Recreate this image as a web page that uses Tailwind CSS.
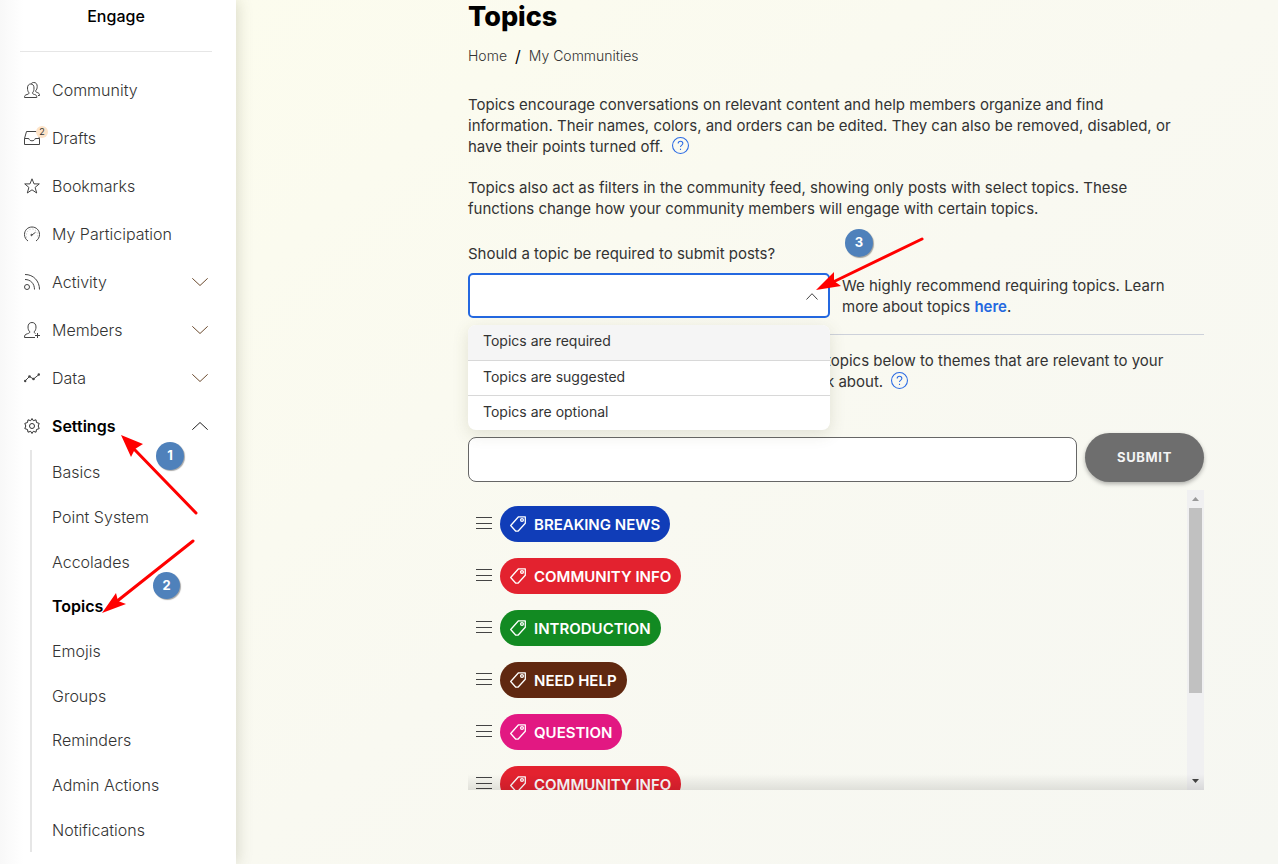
<!DOCTYPE html>
<html lang="en">
<head>
  <meta charset="UTF-8">
  <meta name="viewport" content="width=device-width, initial-scale=1.0">
  <title>Topics</title>
  <script src="https://cdn.jsdelivr.net/npm/@tailwindcss/browser@4"></script>
</head>
<body class="font-['Inter','Liberation_Sans',sans-serif] text-[#333] bg-[#f8f8f2]">
  <div class="relative flex h-screen overflow-hidden">

    <!-- Sidebar -->
    <aside class="relative z-10 w-[236px] shrink-0 bg-linear-to-r from-[#f8f8f8] to-white to-10% shadow-[2px_0_14px_rgba(90,90,50,0.2)]">
      <div class="ml-5 mr-6 h-[52px] border-b border-[#e6e6e6] pt-1 text-center text-base leading-6 font-medium text-black">Engage</div>
      <nav class="pt-[14px] text-base font-light">
        <a href="#" class="flex h-12 items-center gap-3 pl-6">
          <svg class="size-4" viewBox="0 0 16 16" fill="none" stroke="#444" stroke-width="1"><path d="M.5 15.500c0-2 .7-2.500 2.500-3 1.500-.4 2-.7 2-1.700C3.800 9.500 3.500 8 3.500 6 3.500 3.500 4.700 2 6.800 2S10 3.500 10 6c0 2-.3 3.500-1.500 4.800 0 1 .5 1.300 2 1.700 1.800.5 2.300 1 2.300 3z"/><path d="M7 1.800C7.800.8 8.800.5 9.800.5c2.200 0 3.400 1.500 3.400 4 0 1.800-.5 3.200-1.600 4.300 0 1 .4 1.300 1.600 1.700 1.600.5 2.300 1 2.300 3H14"/></svg>
          Community
        </a>
        <a href="#" class="flex h-12 items-center gap-3 pl-6">
          <span class="relative block">
            <svg class="block size-4" viewBox="0 0 16 16" fill="none" stroke="#444"><path d="M.5 8.500V14.500h15V8.500L13.500 1.500h-11zM.5 8.500h4.300c.4 1.500 1.500 2.300 3.200 2.300s2.800-.8 3.200-2.300h4.300"/></svg>
            <span class="absolute -top-1 left-3 size-3 rounded-full bg-[#fde3c8] text-center text-[9px] leading-3 font-normal">2</span>
          </span>
          Drafts
        </a>
        <a href="#" class="flex h-12 items-center gap-3 pl-6">
          <svg class="size-4" viewBox="0 0 16 16" fill="none" stroke="#444"><path d="M8 .8l2 5.100h5.300l-4.200 3.500 1.600 5.600L8 11.800 3.300 15l1.600-5.600L.7 5.900H6z"/></svg>
          Bookmarks
        </a>
        <a href="#" class="flex h-12 items-center gap-3 pl-6">
          <svg class="size-4" viewBox="0 0 16 16" fill="none" stroke="#444"><path d="M4 15C1.800 13.500.5 11.200.5 8.500 .5 4.200 3.800 1 8 1s7.500 3.200 7.500 7.500c0 2.700-1.300 5-3.500 6.500M7.500 9.300L11.500 6.300"/><path stroke-dasharray="1 2" d="M2.500 11.500C1.700 7 4 3 8 3s6.300 4 5.500 8.500" stroke="#bbb"/><circle cx="7.500" cy="9" r=".7"/></svg>
          My Participation
        </a>
        <a href="#" class="flex h-12 items-center gap-3 pl-6 pr-7">
          <svg class="size-4" viewBox="0 0 16 16" fill="none" stroke="#444"><circle cx="3" cy="13" r="2.500"/><path d="M1 5.500c5.500 0 9.500 4 9.500 10M1 .5c8.500 0 14.500 6.500 14.500 15"/></svg>
          Activity
          <svg class="ml-auto w-4 h-2" viewBox="0 0 16 8" fill="none" stroke="#6b4a2e"><path d="M.3.300L8 7.500 15.700.3"/></svg>
        </a>
        <a href="#" class="flex h-12 items-center gap-3 pl-6 pr-7">
          <svg class="size-4" viewBox="0 0 16 16" fill="none" stroke="#444"><path d="M11 15.500H.5c0-2.500.6-3 3-3.800 1.700-.5 2.300-.9 2.300-1.900C4.600 8.700 4 7 4 5 4 2.200 5.500.5 8 .5S12 2.200 12 5c0 2-.6 3.700-1.800 4.800 0 .9.300 1.300 1.300 1.700M13.500 11v5M11 13.500h5"/></svg>
          Members
          <svg class="ml-auto w-4 h-2" viewBox="0 0 16 8" fill="none" stroke="#6b4a2e"><path d="M.3.300L8 7.500 15.700.3"/></svg>
        </a>
        <a href="#" class="flex h-12 items-center gap-3 pl-6 pr-7">
          <svg class="size-4" viewBox="0 0 16 16" fill="none" stroke="#444"><path d="M1 11l4.500-4.500 4 2.500L15 4.500"/><g fill="#444" stroke="none"><circle cx="1.200" cy="11" r="1.200"/><circle cx="5.500" cy="6.500" r="1.300"/><circle cx="9.500" cy="9" r="1.300"/><circle cx="14.800" cy="4.500" r="1.200"/></g></svg>
          Data
          <svg class="ml-auto w-4 h-2" viewBox="0 0 16 8" fill="none" stroke="#6b4a2e"><path d="M.3.300L8 7.500 15.700.3"/></svg>
        </a>
        <a href="#" class="flex h-12 items-center gap-3 pl-6 pr-7 font-semibold text-black">
          <svg class="size-4" viewBox="0 0 16 16" fill="none" stroke="#333"><path d="M8 .5l1.300 2.200 2.700-.9 .5 2.700 2.700.9-1 2.600 1 2.600-2.700.9-.5 2.700-2.700-.9L8 15.500l-1.300-2.200-2.700.9-.5-2.700-2.700-.9 1-2.600-1-2.600 2.700-.9 .5-2.700 2.700.9z" stroke-linejoin="round"/><circle cx="8" cy="8" r="2.500"/></svg>
          Settings
          <svg class="ml-auto w-4 h-2" viewBox="0 0 16 8" fill="none" stroke="#222"><path d="M.3 7.700L8 .5l7.700 7.200"/></svg>
        </a>
        <div class="ml-[30px] grid h-[402px] auto-rows-fr items-center border-l-2 border-[#e6e6e6] pl-5">
          <a href="#">Basics</a>
          <a href="#">Point System</a>
          <a href="#">Accolades</a>
          <a href="#" class="font-semibold text-black">Topics</a>
          <a href="#">Emojis</a>
          <a href="#">Groups</a>
          <a href="#">Reminders</a>
          <a href="#">Admin Actions</a>
          <a href="#">Notifications</a>
        </div>
      </nav>
    </aside>

    <!-- Main -->
    <main class="grow bg-linear-to-br from-[#fcfcee] via-[#f9f9f1] to-[#f6f7f2] pl-[232px] pr-[74px] text-[15px] leading-[21px]">
      <h1 class="text-[27px] leading-[34px] font-extrabold text-black">Topics</h1>
      <div class="mt-3 flex items-center gap-2 text-sm leading-5 font-light">
        <a href="#">Home</a>
        <span class="text-base leading-5 font-normal text-black">/</span>
        <a href="#">My Communities</a>
      </div>

      <p class="mt-7 whitespace-nowrap">Topics encourage conversations on relevant content and help members organize and find<br>information. Their names, colors, and orders can be edited. They can also be removed, disabled, or<br>have their points turned off.
        <button type="button" aria-label="Help" class="ml-1 h-4 align-middle"><svg class="-mt-1 block size-[17px]" viewBox="0 0 16 16" fill="none" stroke="#2b6be4"><circle cx="8" cy="8" r="7.500"/><path d="M5.800 6.200C5.800 4.800 6.700 4 8 4s2.200.8 2.200 2C10.200 7.700 8 7.600 8 9.500M8 11v1.200"/></svg></button>
      </p>
      <p class="mt-5 whitespace-nowrap">Topics also act as filters in the community feed, showing only posts with select topics. These<br>functions change how your community members will engage with certain topics.</p>

      <label for="requirement" class="mt-6 block">Should a topic be required to submit posts?</label>
      <div class="mt-[9px] flex gap-3">
        <div class="relative w-[362px] shrink-0">
          <select id="requirement" class="block h-[45px] w-full appearance-none rounded-[5px] border-2 border-[#2468e0] bg-white px-3 outline-none">
            <option></option>
          </select>
          <svg class="pointer-events-none absolute right-3 top-5 h-[7px] w-3" viewBox="0 0 12 7" fill="none" stroke="#444"><path d="M.5 6.500L6 .7l5.500 5.800"/></svg>
          <ul role="listbox" class="absolute top-[52px] z-10 w-full overflow-hidden rounded-lg bg-white text-sm leading-8 text-[#333] shadow-[0_4px_16px_rgba(90,90,50,0.15)]">
            <li role="option" class="h-9 border-b border-[#d8d8d8] bg-[#f5f5f5] px-[15px]">Topics are required</li>
            <li role="option" class="h-[35px] border-b border-[#d8d8d8] px-[15px]">Topics are suggested</li>
            <li role="option" class="h-[34px] px-[15px]">Topics are optional</li>
          </ul>
        </div>
        <p class="mt-[2px] whitespace-nowrap">We highly recommend requiring topics. Learn<br>more about topics <a href="#" class="font-semibold text-[#2468e0]">here</a>.</p>
      </div>

      <hr class="mt-4 border-[#cdd1da]">
      <p class="mt-[15px] whitespace-nowrap pl-[358px]">topics below to themes that are relevant to your<br>k about.
        <button type="button" aria-label="Help" class="ml-1 h-4 align-middle"><svg class="-mt-1 block size-[17px]" viewBox="0 0 16 16" fill="none" stroke="#2b6be4"><circle cx="8" cy="8" r="7.500"/><path d="M5.800 6.200C5.800 4.800 6.700 4 8 4s2.200.8 2.200 2C10.200 7.700 8 7.600 8 9.500M8 11v1.200"/></svg></button>
      </p>

      <form class="mt-[41px] flex items-end gap-2">
        <input type="text" aria-label="New topic" class="h-[45px] min-w-0 grow rounded-lg border border-[#666] bg-white px-3 outline-none">
        <button type="button" class="h-[49px] w-[119px] shrink-0 rounded-full bg-[#6e6e6e] text-[13px] font-bold tracking-wider text-[#f4f4f4] shadow-[0_2px_4px_rgba(0,0,0,0.3)]">SUBMIT</button>
      </form>

      <div class="relative mt-2 flex h-[300px]">
        <ul id="topics" class="flex grow flex-col gap-4 overflow-hidden pt-4 pl-2"></ul>
        <!-- Scrollbar -->
        <div class="flex w-[17px] flex-col items-center justify-between bg-[#f0f0f1] pb-[7px]">
          <div class="flex flex-col items-center">
            <svg class="my-[7px] h-1 w-[7px]" viewBox="0 0 7 4" fill="#999"><path d="M0 4L3.500 0 7 4z"/></svg>
            <div class="h-[185px] w-[13px] bg-[#c1c1c1]"></div>
          </div>
          <svg class="h-1 w-[7px]" viewBox="0 0 7 4" fill="#444"><path d="M0 0h7L3.500 4z"/></svg>
        </div>
        <div class="pointer-events-none absolute inset-x-0 bottom-0 h-4 bg-linear-to-t from-black/10 to-transparent"></div>
      </div>
    </main>

    <!-- Step callouts -->
    <svg class="pointer-events-none absolute left-0 top-0 z-20 h-[864px] w-[1278px]" viewBox="0 0 1278 864" stroke="#f00" fill="#f00" stroke-width="3" stroke-linecap="round">
      <path d="M196 513L134 449M193 541L116 602M922 239L831 283"/>
      <g stroke="none">
        <path d="M121 435l22 9-8 5-4 8z"/>
        <path d="M102 613l14-20 2 8 8 3z"/>
        <path d="M816 290l18-18v9l7 5z"/>
      </g>
    </svg>
    <span class="absolute left-[156px] top-[442px] z-20 size-7 rounded-full bg-[#4f81bb] text-center text-[13px] leading-[26px] font-bold text-white shadow-[1px_1px_1px_rgba(0,0,0,0.35)]">1</span>
    <span class="absolute left-[153px] top-[572px] z-20 size-[27px] rounded-full bg-[#4f81bb] text-center text-[13px] leading-[26px] font-bold text-white shadow-[1px_1px_1px_rgba(0,0,0,0.35)]">2</span>
    <span class="absolute left-[845px] top-[229px] z-20 size-7 rounded-full bg-[#4f81bb] text-center text-[13px] leading-[26px] font-bold text-white shadow-[1px_1px_1px_rgba(0,0,0,0.35)]">3</span>
  </div>

  <script>
    const topics = [
      { name: 'BREAKING NEWS', color: 'bg-[#103db8]' },
      { name: 'COMMUNITY INFO', color: 'bg-[#e3222f]' },
      { name: 'INTRODUCTION', color: 'bg-[#128a22]' },
      { name: 'NEED HELP', color: 'bg-[#602810]' },
      { name: 'QUESTION', color: 'bg-[#e21882]' },
      { name: 'COMMUNITY INFO', color: 'bg-[#e3222f]' }
    ];

    document.getElementById('topics').innerHTML = topics.map(topic => `
      <li class="flex shrink-0 items-center gap-2">
        <svg class="h-4 w-4" viewBox="0 0 16 16" stroke="#444"><path d="M0 1.500h16M0 7.500h16M0 12.500h16"/></svg>
        <span class="flex h-9 items-center gap-2 rounded-full ${topic.color} px-[10px] text-[15px] font-semibold text-white">
          <svg class="size-4" viewBox="0 0 16 16" fill="none" stroke="#fff" stroke-width="1.300" stroke-linejoin="round"><path d="M.7 9.500L8.500.8h6.800v6.400L8 15.200H5.800z"/><circle cx="12" cy="4" r="1.400"/></svg>
          ${topic.name}
        </span>
      </li>
    `).join('');
  </script>
</body>
</html>
